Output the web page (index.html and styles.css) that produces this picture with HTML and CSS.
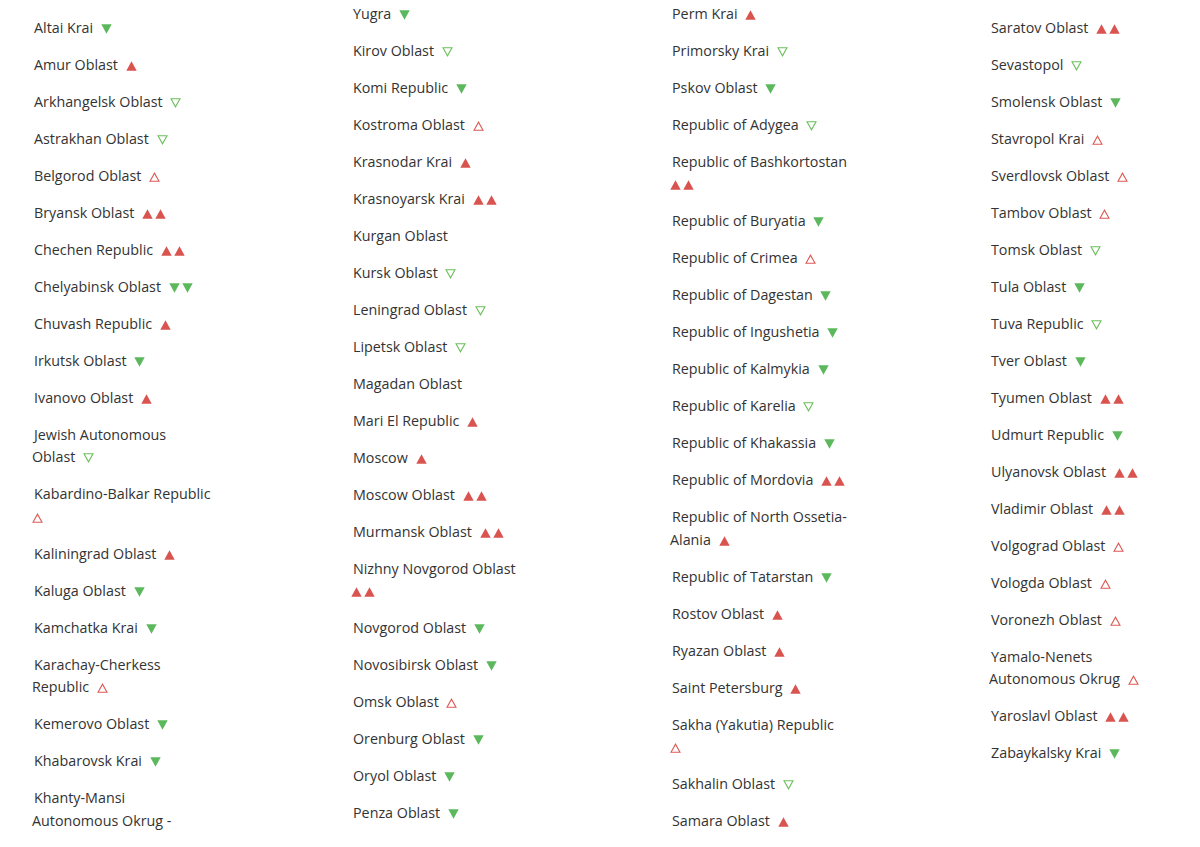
FILE: index.html
```html
<!DOCTYPE html>
<html lang="en">
<head>
<meta charset="utf-8">
<title>Regions</title>
<link rel="stylesheet" href="styles.css">
</head>
<body>
<svg class="defs" aria-hidden="true">
  <symbol id="up" viewBox="0 0 11 10"><polygon points="0.3,9.7 5.5,0.3 10.7,9.7" fill="#d9534f"/></symbol>
  <symbol id="down" viewBox="0 0 11 10"><polygon points="0.3,0.3 10.7,0.3 5.5,9.7" fill="#5cb85c"/></symbol>
  <symbol id="upo" viewBox="0 0 11 10"><polygon points="1,9.3 5.5,1.2 10,9.3" fill="none" stroke="#dd5a55" stroke-width="1.1"/></symbol>
  <symbol id="downo" viewBox="0 0 11 10"><polygon points="1,0.7 10,0.7 5.5,8.8" fill="none" stroke="#6cbf5c" stroke-width="1.1"/></symbol>
</svg>
<div class="grid">
  <ul class="col col-a">
    <li><span class="n">Altai Krai</span> <span class="m"><svg class="t"><use href="#down"/></svg></span></li>
    <li><span class="n">Amur Oblast</span> <span class="m"><svg class="t"><use href="#up"/></svg></span></li>
    <li><span class="n">Arkhangelsk Oblast</span> <span class="m"><svg class="t"><use href="#downo"/></svg></span></li>
    <li><span class="n">Astrakhan Oblast</span> <span class="m"><svg class="t"><use href="#downo"/></svg></span></li>
    <li><span class="n">Belgorod Oblast</span> <span class="m"><svg class="t"><use href="#upo"/></svg></span></li>
    <li><span class="n">Bryansk Oblast</span> <span class="m"><svg class="t"><use href="#up"/></svg><svg class="t"><use href="#up"/></svg></span></li>
    <li><span class="n">Chechen Republic</span> <span class="m"><svg class="t"><use href="#up"/></svg><svg class="t"><use href="#up"/></svg></span></li>
    <li><span class="n">Chelyabinsk Oblast</span> <span class="m"><svg class="t"><use href="#down"/></svg><svg class="t"><use href="#down"/></svg></span></li>
    <li><span class="n">Chuvash Republic</span> <span class="m"><svg class="t"><use href="#up"/></svg></span></li>
    <li><span class="n">Irkutsk Oblast</span> <span class="m"><svg class="t"><use href="#down"/></svg></span></li>
    <li><span class="n">Ivanovo Oblast</span> <span class="m"><svg class="t"><use href="#up"/></svg></span></li>
    <li><span class="n">Jewish Autonomous Oblast</span> <span class="m"><svg class="t"><use href="#downo"/></svg></span></li>
    <li><span class="n">Kabardino-Balkar Republic</span> <span class="m"><svg class="t"><use href="#upo"/></svg></span></li>
    <li><span class="n">Kaliningrad Oblast</span> <span class="m"><svg class="t"><use href="#up"/></svg></span></li>
    <li><span class="n">Kaluga Oblast</span> <span class="m"><svg class="t"><use href="#down"/></svg></span></li>
    <li><span class="n">Kamchatka Krai</span> <span class="m"><svg class="t"><use href="#down"/></svg></span></li>
    <li><span class="n">Karachay-Cherkess Republic</span> <span class="m"><svg class="t"><use href="#upo"/></svg></span></li>
    <li><span class="n">Kemerovo Oblast</span> <span class="m"><svg class="t"><use href="#down"/></svg></span></li>
    <li><span class="n">Khabarovsk Krai</span> <span class="m"><svg class="t"><use href="#down"/></svg></span></li>
    <li class="split"><span class="n">Khanty-Mansi Autonomous Okrug -</span></li>
  </ul>
  <ul class="col col-b">
    <li><span class="n">Yugra</span> <span class="m"><svg class="t"><use href="#down"/></svg></span></li>
    <li><span class="n">Kirov Oblast</span> <span class="m"><svg class="t"><use href="#downo"/></svg></span></li>
    <li><span class="n">Komi Republic</span> <span class="m"><svg class="t"><use href="#down"/></svg></span></li>
    <li><span class="n">Kostroma Oblast</span> <span class="m"><svg class="t"><use href="#upo"/></svg></span></li>
    <li><span class="n">Krasnodar Krai</span> <span class="m"><svg class="t"><use href="#up"/></svg></span></li>
    <li><span class="n">Krasnoyarsk Krai</span> <span class="m"><svg class="t"><use href="#up"/></svg><svg class="t"><use href="#up"/></svg></span></li>
    <li><span class="n">Kurgan Oblast</span></li>
    <li><span class="n">Kursk Oblast</span> <span class="m"><svg class="t"><use href="#downo"/></svg></span></li>
    <li><span class="n">Leningrad Oblast</span> <span class="m"><svg class="t"><use href="#downo"/></svg></span></li>
    <li><span class="n">Lipetsk Oblast</span> <span class="m"><svg class="t"><use href="#downo"/></svg></span></li>
    <li><span class="n">Magadan Oblast</span></li>
    <li><span class="n">Mari El Republic</span> <span class="m"><svg class="t"><use href="#up"/></svg></span></li>
    <li><span class="n">Moscow</span> <span class="m"><svg class="t"><use href="#up"/></svg></span></li>
    <li><span class="n">Moscow Oblast</span> <span class="m"><svg class="t"><use href="#up"/></svg><svg class="t"><use href="#up"/></svg></span></li>
    <li><span class="n">Murmansk Oblast</span> <span class="m"><svg class="t"><use href="#up"/></svg><svg class="t"><use href="#up"/></svg></span></li>
    <li><span class="n">Nizhny Novgorod Oblast</span> <span class="m"><svg class="t"><use href="#up"/></svg><svg class="t"><use href="#up"/></svg></span></li>
    <li><span class="n">Novgorod Oblast</span> <span class="m"><svg class="t"><use href="#down"/></svg></span></li>
    <li><span class="n">Novosibirsk Oblast</span> <span class="m"><svg class="t"><use href="#down"/></svg></span></li>
    <li><span class="n">Omsk Oblast</span> <span class="m"><svg class="t"><use href="#upo"/></svg></span></li>
    <li><span class="n">Orenburg Oblast</span> <span class="m"><svg class="t"><use href="#down"/></svg></span></li>
    <li><span class="n">Oryol Oblast</span> <span class="m"><svg class="t"><use href="#down"/></svg></span></li>
    <li><span class="n">Penza Oblast</span> <span class="m"><svg class="t"><use href="#down"/></svg></span></li>
  </ul>
  <ul class="col col-b">
    <li><span class="n">Perm Krai</span> <span class="m"><svg class="t"><use href="#up"/></svg></span></li>
    <li><span class="n">Primorsky Krai</span> <span class="m"><svg class="t"><use href="#downo"/></svg></span></li>
    <li><span class="n">Pskov Oblast</span> <span class="m"><svg class="t"><use href="#down"/></svg></span></li>
    <li><span class="n">Republic of Adygea</span> <span class="m"><svg class="t"><use href="#downo"/></svg></span></li>
    <li><span class="n">Republic of Bashkortostan</span> <span class="m"><svg class="t"><use href="#up"/></svg><svg class="t"><use href="#up"/></svg></span></li>
    <li><span class="n">Republic of Buryatia</span> <span class="m"><svg class="t"><use href="#down"/></svg></span></li>
    <li><span class="n">Republic of Crimea</span> <span class="m"><svg class="t"><use href="#upo"/></svg></span></li>
    <li><span class="n">Republic of Dagestan</span> <span class="m"><svg class="t"><use href="#down"/></svg></span></li>
    <li><span class="n">Republic of Ingushetia</span> <span class="m"><svg class="t"><use href="#down"/></svg></span></li>
    <li><span class="n">Republic of Kalmykia</span> <span class="m"><svg class="t"><use href="#down"/></svg></span></li>
    <li><span class="n">Republic of Karelia</span> <span class="m"><svg class="t"><use href="#downo"/></svg></span></li>
    <li><span class="n">Republic of Khakassia</span> <span class="m"><svg class="t"><use href="#down"/></svg></span></li>
    <li><span class="n">Republic of Mordovia</span> <span class="m"><svg class="t"><use href="#up"/></svg><svg class="t"><use href="#up"/></svg></span></li>
    <li><span class="n">Republic of North Ossetia-Alania</span> <span class="m"><svg class="t"><use href="#up"/></svg></span></li>
    <li><span class="n">Republic of Tatarstan</span> <span class="m"><svg class="t"><use href="#down"/></svg></span></li>
    <li><span class="n">Rostov Oblast</span> <span class="m"><svg class="t"><use href="#up"/></svg></span></li>
    <li><span class="n">Ryazan Oblast</span> <span class="m"><svg class="t"><use href="#up"/></svg></span></li>
    <li><span class="n">Saint Petersburg</span> <span class="m"><svg class="t"><use href="#up"/></svg></span></li>
    <li><span class="n">Sakha (Yakutia) Republic</span> <span class="m"><svg class="t"><use href="#upo"/></svg></span></li>
    <li><span class="n">Sakhalin Oblast</span> <span class="m"><svg class="t"><use href="#downo"/></svg></span></li>
    <li><span class="n">Samara Oblast</span> <span class="m"><svg class="t"><use href="#up"/></svg></span></li>
  </ul>
  <ul class="col col-a">
    <li><span class="n">Saratov Oblast</span> <span class="m"><svg class="t"><use href="#up"/></svg><svg class="t"><use href="#up"/></svg></span></li>
    <li><span class="n">Sevastopol</span> <span class="m"><svg class="t"><use href="#downo"/></svg></span></li>
    <li><span class="n">Smolensk Oblast</span> <span class="m"><svg class="t"><use href="#down"/></svg></span></li>
    <li><span class="n">Stavropol Krai</span> <span class="m"><svg class="t"><use href="#upo"/></svg></span></li>
    <li><span class="n">Sverdlovsk Oblast</span> <span class="m"><svg class="t"><use href="#upo"/></svg></span></li>
    <li><span class="n">Tambov Oblast</span> <span class="m"><svg class="t"><use href="#upo"/></svg></span></li>
    <li><span class="n">Tomsk Oblast</span> <span class="m"><svg class="t"><use href="#downo"/></svg></span></li>
    <li><span class="n">Tula Oblast</span> <span class="m"><svg class="t"><use href="#down"/></svg></span></li>
    <li><span class="n">Tuva Republic</span> <span class="m"><svg class="t"><use href="#downo"/></svg></span></li>
    <li><span class="n">Tver Oblast</span> <span class="m"><svg class="t"><use href="#down"/></svg></span></li>
    <li><span class="n">Tyumen Oblast</span> <span class="m"><svg class="t"><use href="#up"/></svg><svg class="t"><use href="#up"/></svg></span></li>
    <li><span class="n">Udmurt Republic</span> <span class="m"><svg class="t"><use href="#down"/></svg></span></li>
    <li><span class="n">Ulyanovsk Oblast</span> <span class="m"><svg class="t"><use href="#up"/></svg><svg class="t"><use href="#up"/></svg></span></li>
    <li><span class="n">Vladimir Oblast</span> <span class="m"><svg class="t"><use href="#up"/></svg><svg class="t"><use href="#up"/></svg></span></li>
    <li><span class="n">Volgograd Oblast</span> <span class="m"><svg class="t"><use href="#upo"/></svg></span></li>
    <li><span class="n">Vologda Oblast</span> <span class="m"><svg class="t"><use href="#upo"/></svg></span></li>
    <li><span class="n">Voronezh Oblast</span> <span class="m"><svg class="t"><use href="#upo"/></svg></span></li>
    <li><span class="n">Yamalo-Nenets Autonomous Okrug</span> <span class="m"><svg class="t"><use href="#upo"/></svg></span></li>
    <li><span class="n">Yaroslavl Oblast</span> <span class="m"><svg class="t"><use href="#up"/></svg><svg class="t"><use href="#up"/></svg></span></li>
    <li><span class="n">Zabaykalsky Krai</span> <span class="m"><svg class="t"><use href="#down"/></svg></span></li>
  </ul>
</div>
</body>
</html>
```
FILE: styles.css
```css
html, body {
  margin: 0;
  padding: 0;
  background: #fff;
}
body {
  font-family: "Open Sans", "Noto Sans", sans-serif;
  font-size: 14.3px;
  color: #333;
  overflow: hidden;
}
.defs {
  position: absolute;
  width: 0;
  height: 0;
  overflow: hidden;
}
.grid {
  display: grid;
  grid-template-columns: repeat(4, 200px);
  column-gap: 119px;
  padding-left: 32px;
  align-items: start;
}
.col {
  list-style: none;
  margin: 0;
  padding: 0;
}
.col-a { padding-top: 16.5px; }
.col-b { padding-top: 2.5px; }
.col li {
  max-width: 184px;
  line-height: 22.5px;
  margin-bottom: 14.5px;
  text-indent: 2px;
}
.col li.split { max-width: 170px; }
.n { padding-right: 4px; }
.m { white-space: nowrap; text-indent: 0; }
.t {
  width: 11px;
  height: 10px;
  vertical-align: -1px;
  margin-right: 2px;
}
```
